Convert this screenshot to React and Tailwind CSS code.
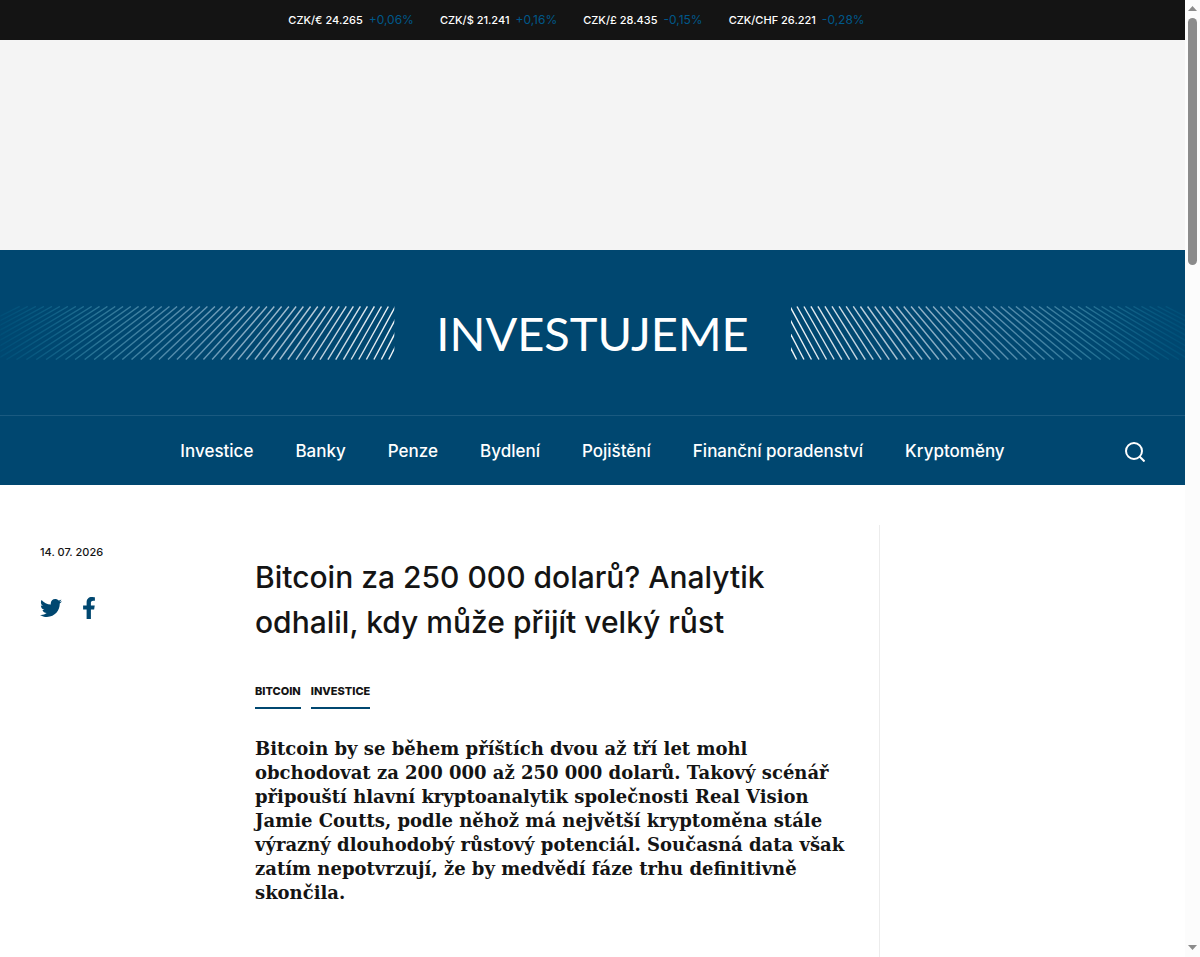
import { FaTwitter, FaFacebookF } from "react-icons/fa";

const rates = [
    { pair: "CZK/€", value: "24.265", change: "+0,06%" },
    { pair: "CZK/$", value: "21.241", change: "+0,16%" },
    { pair: "CZK/£", value: "28.435", change: "-0,15%" },
    { pair: "CZK/CHF", value: "26.221", change: "-0,28%" },
];

const links = [
    "Investice",
    "Banky",
    "Penze",
    "Bydlení",
    "Pojištění",
    "Finanční poradenství",
    "Kryptoměny",
];

const tags = ["Bitcoin", "Investice"];

// the lines lean further and spread out towards the outer edge
const lines = [];
for (let k = -4; k < 50; k++) {
    lines.push({
        top: 6 + 6.93 * k + 0.012 * k * k,
        bottom: 35.5 + 7.6 * k + 0.03 * k * k,
    });
}

const Ticker = () => {
    return (
        <div className="flex h-10 items-center justify-center gap-[26px] bg-[#141414] pr-8">
            {rates.map((rate) => (
                <div key={rate.pair} className="flex items-baseline gap-[6px]">
                    <span className="text-[11px] font-medium text-white">
                        {rate.pair} {rate.value}
                    </span>
                    <span className="text-xs text-[#00588a]">{rate.change}</span>
                </div>
            ))}
        </div>
    );
};

const Stripes = ({ id, className }) => {
    return (
        <svg
            viewBox="0 0 394 54"
            preserveAspectRatio="xMinYMid slice"
            className={className}
            aria-hidden="true"
        >
            <defs>
                <linearGradient id={id} gradientUnits="userSpaceOnUse" x1="0" y1="0" x2="394" y2="0">
                    <stop offset="0" stopColor="#f2f6f8" />
                    <stop offset="0.25" stopColor="#a9c1d2" />
                    <stop offset="0.5" stopColor="#6093b2" />
                    <stop offset="0.75" stopColor="#2a7597" />
                    <stop offset="1" stopColor="#006088" stopOpacity="0.3" />
                </linearGradient>
            </defs>
            <g stroke={`url(#${id})`} strokeWidth="1.4">
                {lines.map((line, i) => (
                    <line key={i} x1={line.top} y1="0.5" x2={line.bottom} y2="53.5" />
                ))}
            </g>
        </svg>
    );
};

const Header = () => {
    return (
        <header className="bg-[#004770] text-white">
            <div className="flex h-[165px] items-center gap-[42px]">
                <Stripes id="stripes-left" className="h-[54px] min-w-0 flex-1 -scale-x-100" />
                <a href="#" className="font-[Lato] text-[47px] leading-[54px]">
                    INVESTUJEME
                </a>
                <Stripes id="stripes-right" className="h-[54px] min-w-0 flex-1" />
            </div>
            <div className="relative flex h-[70px] items-center justify-center border-t border-[#1a5a80] pt-[2px]">
                <nav className="flex gap-[42px] text-[17px] font-medium">
                    {links.map((link) => (
                        <a key={link} href="#">
                            {link}
                        </a>
                    ))}
                </nav>
                <button className="absolute right-10" aria-label="Hledat">
                    <svg width="20" height="20" viewBox="0 0 20 20" fill="none" stroke="currentColor" strokeWidth="2">
                        <circle cx="9" cy="9" r="8" />
                        <path d="M14.5 14.5 19.5 19.5" />
                    </svg>
                </button>
            </div>
        </header>
    );
};

const Article = () => {
    return (
        <main className="flex flex-1 px-10 pt-10 text-[#141414]">
            <div className="w-[215px] shrink-0 pt-[18px]">
                <time className="block text-[11px] leading-[18px] font-medium">14. 07. 2026</time>
                <div className="mt-9 flex gap-4 text-[#004770]">
                    <a href="#" aria-label="Twitter">
                        <FaTwitter size={22} />
                    </a>
                    <a href="#" aria-label="Facebook">
                        <FaFacebookF size={22} />
                    </a>
                </div>
            </div>
            <article className="w-[625px] shrink-0 border-r border-[#ececec] pt-[30px]">
                <h1 className="text-[30px] leading-[45px] font-medium">
                    Bitcoin za 250 000 dolarů? Analytik
                    <br />
                    odhalil, kdy může přijít velký růst
                </h1>
                <ul className="mt-[38px] flex gap-[10px] text-[11px] leading-4 font-extrabold uppercase">
                    {tags.map((tag) => (
                        <li key={tag} className="border-b-2 border-[#004770] pb-2">
                            <a href="#">{tag}</a>
                        </li>
                    ))}
                </ul>
                <p className="mt-7 font-['DejaVu_Serif',serif] text-[18px] leading-6 font-bold">
                    Bitcoin by se během příštích dvou až tří let mohl
                    <br />
                    obchodovat za 200 000 až 250 000 dolarů. Takový scénář
                    <br />
                    připouští hlavní kryptoanalytik společnosti Real Vision
                    <br />
                    Jamie Coutts, podle něhož má největší kryptoměna stále
                    <br />
                    výrazný dlouhodobý růstový potenciál. Současná data však
                    <br />
                    zatím nepotvrzují, že by medvědí fáze trhu definitivně
                    <br />
                    skončila.
                </p>
            </article>
        </main>
    );
};

const Scrollbar = () => {
    return (
        <div className="flex w-[15px] shrink-0 flex-col items-center bg-[#fcfcfc] pt-[6px] pb-[7px]">
            <svg width="9" height="5" viewBox="0 0 9 5" fill="#8b8b8b">
                <path d="M4.5 0 9 5H0z" />
            </svg>
            <div className="mt-[7px] h-[247px] w-[9px] rounded-full bg-[#8b8b8b]" />
            <svg width="9" height="5" viewBox="0 0 9 5" fill="#8b8b8b" className="mt-auto">
                <path d="M0 0h9L4.5 5z" />
            </svg>
        </div>
    );
};

export default function App() {
    return (
        <div className="flex h-screen overflow-hidden bg-white font-[Inter,sans-serif]">
            <div className="flex min-w-0 flex-1 flex-col">
                <Ticker />
                <div className="h-[210px] shrink-0 bg-[#f4f4f4]" />
                <Header />
                <Article />
            </div>
            <Scrollbar />
        </div>
    );
}
